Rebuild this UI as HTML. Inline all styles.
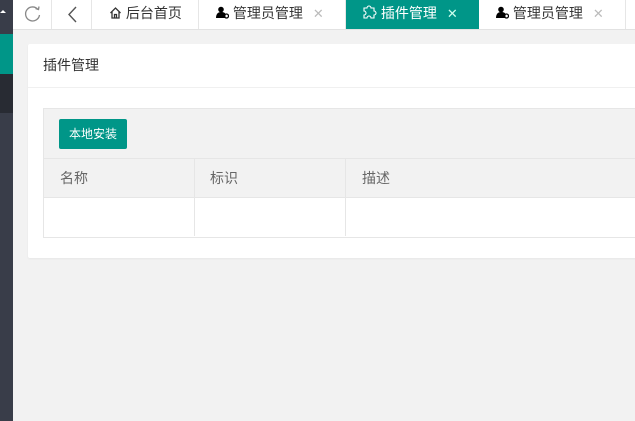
<!DOCTYPE html><html><head><meta charset="utf-8"><style>
*{box-sizing:border-box;margin:0;padding:0}
body{width:635px;height:421px;overflow:hidden;background:#f2f2f2;font-family:"Liberation Sans","Noto Sans CJK SC",sans-serif;position:relative;font-size:14px;color:#333}
.sb{position:absolute;left:0;top:0;width:13px;height:421px;background:#393d49}
.a{position:absolute}
.tabs{position:absolute;left:13px;top:0;width:622px;height:30px;background:#fff;border-bottom:1px solid #e2e2e2}
.t{position:absolute;top:0;height:29px;border-right:1px solid #e6e6e6;line-height:27px;font-size:14px;color:#333;white-space:nowrap}
.x{color:#bbb;font-size:13px;margin-left:10px}
.card{position:absolute;left:28px;top:44px;width:620px;height:214px;background:#fff;border-radius:2px;box-shadow:0 1px 2px rgba(0,0,0,.05)}
.tb{position:absolute;left:43px;top:108px;width:600px;height:130px;border:1px solid #e6e6e6}
</style></head><body>
<div class="sb"></div>
<div class="a" style="left:0;top:10px;width:0;height:0;border-left:3px solid transparent;border-right:3px solid transparent;border-bottom:3px solid #fff"></div>
<div class="a" style="left:0;top:34px;width:13px;height:40px;background:#009688"></div>
<div class="a" style="left:0;top:74px;width:13px;height:39px;background:#282b33"></div>
<div class="tabs">
<div class="t" style="left:0;width:39px"><svg width="39" height="29"><path d="M25 9.5A7 7 0 1 0 26.5 15" fill="none" stroke="#888" stroke-width="1.3"/><path d="M22.5 8.5l3 1 .5-3" fill="none" stroke="#888" stroke-width="1.3"/></svg></div>
<div class="t" style="left:39px;width:40px"><svg width="40" height="29"><path d="M24 7l-7 7.5 7 7.5" fill="none" stroke="#555" stroke-width="1.4"/></svg></div>
<div class="t" style="left:79px;width:107px;padding-left:17px"><svg width="13" height="13" style="vertical-align:-1px"><path d="M1.5 7L6.5 2l5 5M3 6v6h7V6M5.5 12V8.5h2V12" fill="none" stroke="#333" stroke-width="1.3"/></svg> 后台首页</div>
<div class="t" style="left:186px;width:147px;padding-left:17px"><svg width="13" height="13" style="vertical-align:-1px"><circle cx="5" cy="3.5" r="2.8"/><path d="M0 12c0-4 2-6 5-6s4 1 4.5 2v4z"/><circle cx="10.5" cy="10" r="2" fill="none" stroke="#000" stroke-width="1.3"/></svg> 管理员管理<span class="x">✕</span></div>
<div class="t" style="left:333px;width:133px;padding-left:17px;background:#009688;color:#fff;border-right:none"><svg width="14" height="14" style="vertical-align:-1px"><path d="M4 3a2 2 0 0 1 4 0h3v3a2 2 0 0 1 0 4v3H8a2 2 0 0 0-4 0H1v-3a2 2 0 0 0 0-4V3z" fill="none" stroke="#fff" stroke-width="1.1"/></svg> 插件管理<span class="x" style="color:#cfe">✕</span></div>
<div class="t" style="left:466px;width:147px;padding-left:17px"><svg width="13" height="13" style="vertical-align:-1px"><circle cx="5" cy="3.5" r="2.8"/><path d="M0 12c0-4 2-6 5-6s4 1 4.5 2v4z"/><circle cx="10.5" cy="10" r="2" fill="none" stroke="#000" stroke-width="1.3"/></svg> 管理员管理<span class="x">✕</span></div>
</div>
<div class="card">
<div style="height:44px;line-height:43px;padding-left:15px;border-bottom:1px solid #f0f0f0;font-size:14px;color:#333">插件管理</div>
</div>
<div class="tb">
<div style="height:50px;background:#f2f2f2;border-bottom:1px solid #e6e6e6;position:relative">
<div class="a" style="left:15px;top:10px;width:68px;height:30px;background:#009688;border-radius:2px;color:#fff;font-size:12px;line-height:30px;text-align:center">本地安装</div></div>
<div style="height:39px;background:#f2f2f2;border-bottom:1px solid #e6e6e6;position:relative;color:#666">
<div class="a" style="left:0;width:151px;height:39px;border-right:1px solid #e6e6e6;padding-left:16px;line-height:39px">名称</div>
<div class="a" style="left:151px;width:151px;height:39px;border-right:1px solid #e6e6e6;padding-left:15px;line-height:39px">标识</div>
<div class="a" style="left:302px;height:39px;padding-left:16px;line-height:39px">描述</div></div>
<div style="height:38px;background:#fff;position:relative">
<div class="a" style="left:150px;width:1px;height:38px;background:#e6e6e6"></div>
<div class="a" style="left:301px;width:1px;height:38px;background:#e6e6e6"></div></div>
</div>
</body></html>
